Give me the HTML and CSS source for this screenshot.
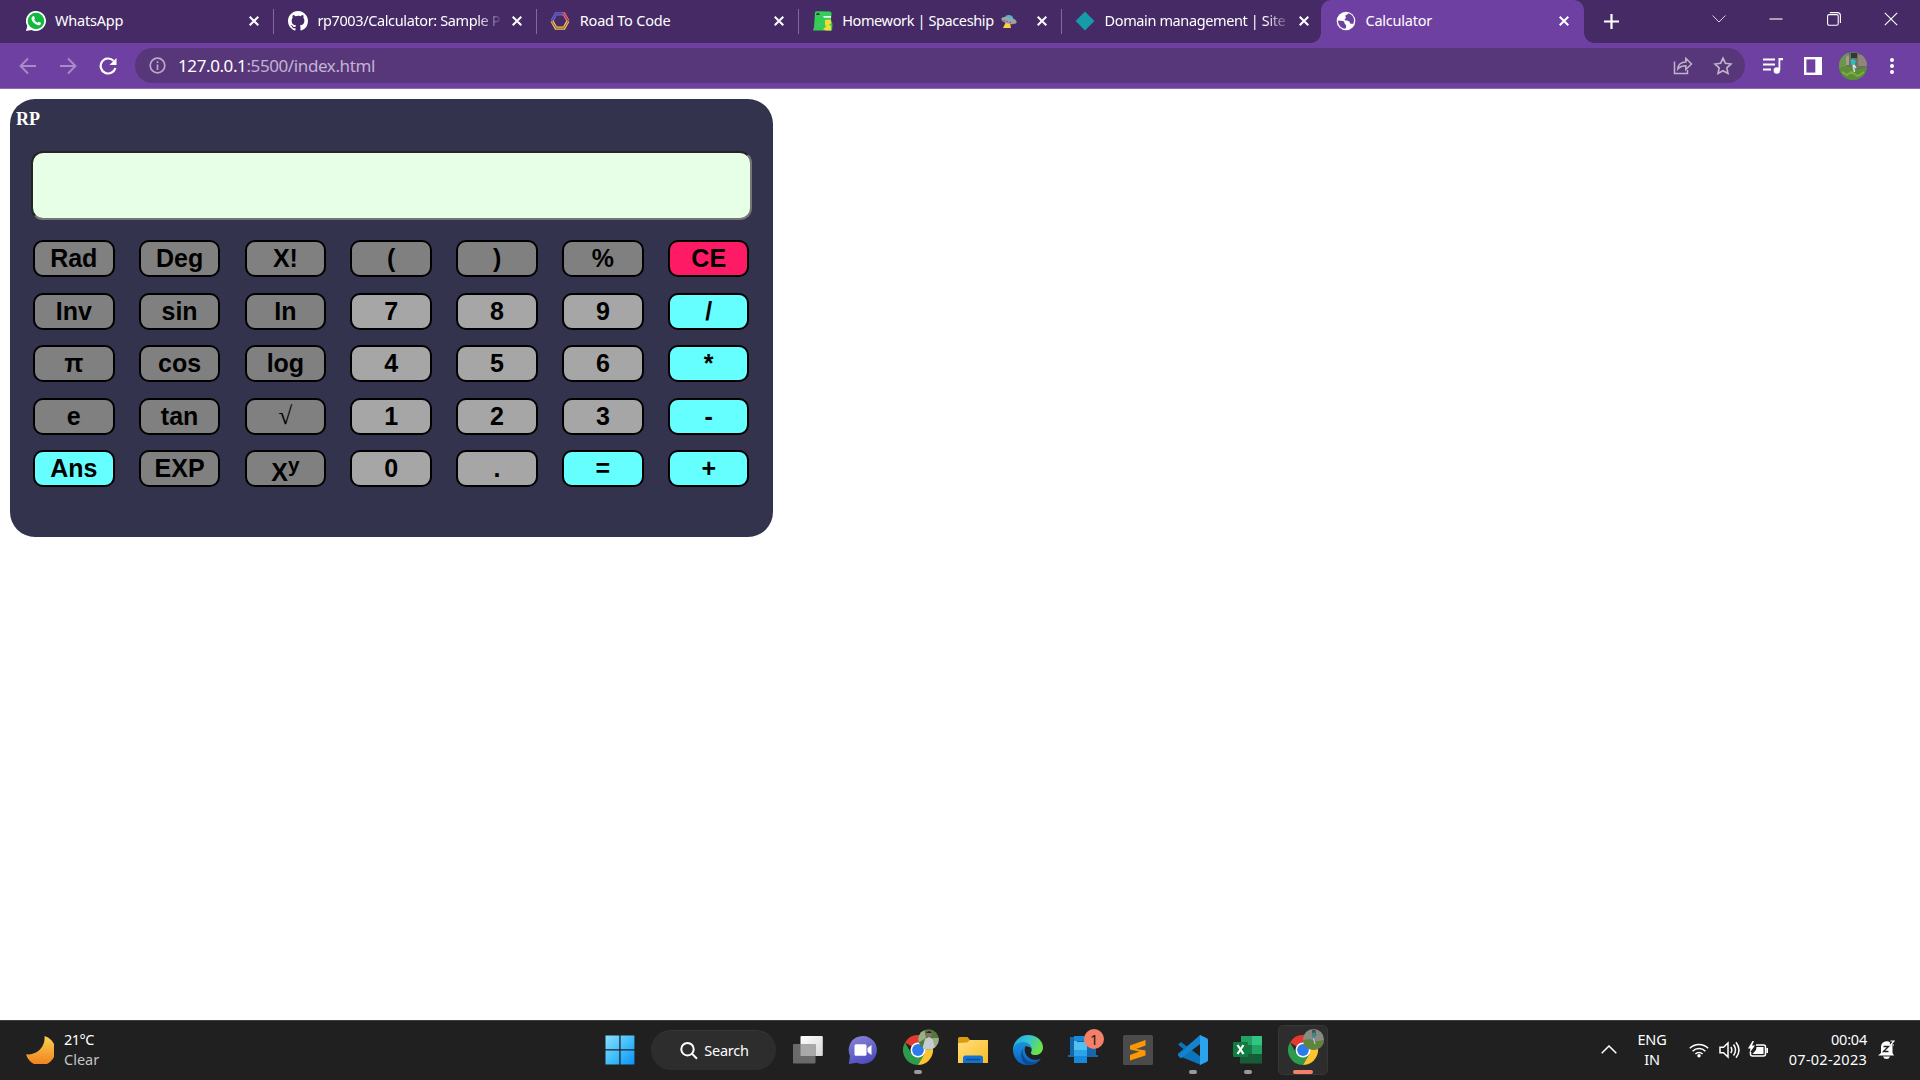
FILE: index.html
```html
<!DOCTYPE html>
<html lang="en">
<head>
<meta charset="utf-8">
<title>Calculator</title>
<link rel="stylesheet" href="styles.css">
</head>
<body>
<svg class="defs" aria-hidden="true">
  <defs>
    <linearGradient id="winG" x1="0" y1="0" x2="1" y2="1"><stop offset="0" stop-color="#8adfff"/><stop offset=".5" stop-color="#43bffc"/><stop offset="1" stop-color="#0a93fb"/></linearGradient>
    <linearGradient id="moonG" x1="0" y1="0" x2="0" y2="1"><stop offset="0" stop-color="#f8d34c"/><stop offset="1" stop-color="#f07f1e"/></linearGradient>
    <linearGradient id="chatG" x1="0" y1="0" x2=".4" y2="1"><stop offset="0" stop-color="#8b86d4"/><stop offset="1" stop-color="#514fc4"/></linearGradient>
    <linearGradient id="tvG" x1="0" y1="0" x2="1" y2="1"><stop offset="0" stop-color="#ffffff"/><stop offset="1" stop-color="#d8d8d8"/></linearGradient>
    <linearGradient id="folderG" x1="0" y1="0" x2="1" y2="1"><stop offset="0" stop-color="#ffdf7c"/><stop offset="1" stop-color="#f9bc27"/></linearGradient>
    <linearGradient id="edgeTop" x1="0" y1="0" x2="1" y2=".4"><stop offset="0" stop-color="#1ba6e6"/><stop offset=".5" stop-color="#33c3d6"/><stop offset="1" stop-color="#6be24a"/></linearGradient>
    <linearGradient id="edgeLow" x1="0" y1="0" x2="0" y2="1"><stop offset="0" stop-color="#1a93e0"/><stop offset="1" stop-color="#0b5fc0"/></linearGradient>
    <symbol id="x" viewBox="0 0 10 10"><path d="M.7.7l8.6 8.6M9.3.7L.7 9.3" stroke="#fff" stroke-width="2" fill="none"/></symbol>
    <symbol id="chrome" viewBox="0 0 30 30">
      <path d="M15 15L2 7.5A15 15 0 0 1 28 7.5z" fill="#e23a2e"/>
      <path d="M15 0a15 15 0 0 1 13 7.5H15z" fill="#e23a2e"/>
      <path d="M2 7.5A15 15 0 0 0 15 30l6.5-11.300L15 15 8.500 18.750z" fill="#2c9b4b"/>
      <path d="M28 7.500A15 15 0 0 1 15 30L21.500 18.750 15 7.500z" fill="#fcc52f"/>
      <circle cx="15" cy="15" r="7.500" fill="#fff"/><circle cx="15" cy="15" r="5.900" fill="#2b7bea"/>
    </symbol>
  </defs>
</svg>

<header class="tabstrip">
  <div class="tab">
    <svg class="fav" viewBox="0 0 20 20"><path d="M10 0a10 10 0 1 1-4.600 18.900L0 20l1.300-5A10 10 0 0 1 10 0z" fill="#fff"/><circle cx="10" cy="10" r="8.300" fill="#12b93e"/><path d="M6.800 5.200c.6-.4 1.200-.1 1.400.4l.7 1.600c.1.500-.7 1-.7 1.400.7 1.500 1.800 2.500 3.300 3.200.5.100.9-1.100 1.400-1l1.900.9c.5.300 0 1.700-.8 2.200-1.200.8-3.100.2-4.700-.8-1.900-1.200-3.600-3.200-3.800-5-.1-1.200.5-2.300 1.300-2.900z" fill="#fff"/></svg>
    <span class="title">WhatsApp</span><svg class="close"><use href="#x"/></svg>
  </div>
  <div class="tab">
    <svg class="fav" viewBox="0 0 16 16"><path fill="#fff" d="M8 0C3.580 0 0 3.580 0 8c0 3.540 2.290 6.530 5.470 7.590.4.070.55-.17.55-.38 0-.19-.01-.82-.01-1.490-2.010.37-2.530-.49-2.690-.94-.09-.23-.48-.94-.82-1.130-.28-.15-.68-.52-.01-.53.63-.01 1.080.58 1.230.82.72 1.210 1.870.87 2.330.66.07-.52.28-.87.51-1.070-1.780-.2-3.640-.89-3.640-3.950 0-.87.31-1.590.82-2.150-.08-.2-.36-1.020.08-2.120 0 0 .67-.21 2.200.82A7.600 7.600 0 0 1 8 3.860c.68 0 1.360.09 2 .27 1.530-1.040 2.200-.82 2.200-.82.44 1.100.16 1.920.08 2.120.51.56.82 1.270.82 2.150 0 3.070-1.870 3.750-3.650 3.950.29.25.54.73.54 1.480 0 1.070-.01 1.930-.01 2.200 0 .21.15.46.55.38A8.010 8.010 0 0 0 16 8c0-4.420-3.580-8-8-8z"/></svg>
    <span class="title fade snug">rp7003/Calculator: Sample P</span><svg class="close"><use href="#x"/></svg>
  </div>
  <div class="tab">
    <svg class="fav" viewBox="0 0 20 20" fill="none" stroke-width="3.200"><path d="M2 10l4-7.200h7" stroke="#6a62d8"/><path d="M12.500 2.800H14L18 10" stroke="#f0686c"/><path d="M2 10l4 7.200h8L18 10" stroke="#f2c14a"/><path d="M1.800 10L6 2.800h8l4.200 7.200-4.200 7.200H6z" stroke="#462a66" stroke-width=".7"/></svg>
    <span class="title">Road To Code</span><svg class="close"><use href="#x"/></svg>
  </div>
  <div class="tab">
    <svg class="fav" viewBox="0 0 20 20"><path d="M2 1Q3 0 5 .3L17 .5q2 .5 1.500 2.500l-.5 6 1.500 4-.5 6.500H0l1-3z" fill="#35cd57"/><path d="M10 5h8v1.800h-7z" fill="#eafbe8"/><path d="M12 9l6-.5v4l-2 1 2 1.500v4.500h-5l-3-1 3-3-1-2z" fill="#f2dc3b"/><path d="M3 3l2.500-1.500L7 4H3z" fill="#1c4f2d"/></svg>
    <span class="title snug">Homework | Spaceship</span>
    <svg class="ufo" viewBox="0 0 16 14"><path d="M5 8l-3 6h8l-1-5z" fill="#fbd23b"/><path d="M4 4a4 3.500 10 0 1 8 1z" fill="#35b9f1"/><ellipse cx="8" cy="6.500" rx="7.800" ry="3.300" transform="rotate(14 8 6.500)" fill="#9da3a8"/><path d="M2.500 6.500l9 2.300" stroke="#5c6368" stroke-width="1.200" stroke-dasharray="1.500 1.500"/></svg>
    <span class="grow"></span><svg class="close"><use href="#x"/></svg>
  </div>
  <div class="tab">
    <svg class="fav" viewBox="0 0 20 20"><path d="M10 .6L19.400 10 10 19.400.6 10z" fill="#159baa"/></svg>
    <span class="title fade snug">Domain management | Site</span><svg class="close"><use href="#x"/></svg>
  </div>
  <div class="tab active">
    <svg class="fav" viewBox="0 0 20 20"><circle cx="10" cy="10" r="9.300" fill="#fff"/><path d="M2 9.500c2 .3 4 0 5.600.8 1.400.8.400 2.600 1.800 3.200 1.200.6 1 2.500-.1 4.300C5 17.500 2 14 2 9.500zM12.300 2.300c-.2 1.500-1.700 1.400-2.700 2-.8.800.5 1.700.2 2.700-.2.900-1.700 1.200-1.100 2.100.8 1 2.800.4 4.100 1.100 1.200.7.900 2 1.800 2.500.9.300 1.900-.2 2.600.3C19.500 8 17 3.800 12.300 2.300z" fill="#6e40a1"/></svg>
    <span class="title">Calculator</span><svg class="close"><use href="#x"/></svg>
  </div>
  <svg class="newtab" viewBox="0 0 15 15"><path d="M7.500 0v15M0 7.500h15" stroke="#fff" stroke-width="2.200"/></svg>
  <div class="winctl">
    <svg class="thin" viewBox="0 0 14 14"><path d="M.6 3.500L7 10l6.400-6.500"/></svg>
    <svg viewBox="0 0 14 14"><path d="M.5 7h13"/></svg>
    <svg viewBox="0 0 14 14"><rect x=".6" y="2.600" width="10.600" height="10.600" rx="1.500"/><path d="M2.800.6h7.600a3 3 0 0 1 3 3v7.400"/></svg>
    <svg viewBox="0 0 14 14"><path d="M.8.8l12.400 12.400M13.200.8L.8 13.200"/></svg>
  </div>
</header>

<nav class="toolbar">
  <svg class="nav dim" viewBox="0 0 18 18"><path d="M17 9H2M9 1.500L1.500 9 9 16.500"/></svg>
  <svg class="nav dim" viewBox="0 0 18 18"><path d="M1 9h15M9 1.500L16.500 9 9 16.500"/></svg>
  <svg class="nav reload" viewBox="0 0 18 18"><path d="M16.400 11A7.500 7.500 0 1 1 14.500 3.700" /><path d="M17.500 1v7h-7z" fill="#fff" stroke="none"/></svg>
  <div class="omnibox">
    <svg class="info" viewBox="0 0 17 17"><circle cx="8.500" cy="8.500" r="7.300"/><path d="M8.500 7.500V13M8.500 4.200v1.900"/></svg>
    <span class="url"><b>127.0.0.1</b>:5500/index.html</span>
    <svg class="oicon share" viewBox="0 0 20 18"><path d="M1.500 4.500v12h13V13M4.800 12c.5-4.800 3-7 8-7V1.300L18.500 7l-5.700 5.500V8.800c-3.600 0-5.800.8-8 3.200z"/></svg>
    <svg class="oicon" viewBox="0 0 18 18"><path d="M9 2l2.150 4.600 5 .6-3.700 3.450 1 5L9 13.200l-4.450 2.450 1-5L1.850 7.200l5-.6z"/></svg>
  </div>
  <svg class="music" viewBox="0 0 20 16"><path d="M0 1.500h12M0 6.500h12M0 11.500h8" stroke="#fff" stroke-width="2"/><path d="M15.500 0H20v2.200h-2.700V12h-1.800z" fill="#fff"/><circle cx="13.800" cy="12.500" r="3.200" fill="#fff"/></svg>
  <svg class="panel" viewBox="0 0 18 18"><rect x="1.200" y="1.200" width="15.600" height="15.600" fill="none" stroke="#fff" stroke-width="2.400"/><path d="M11.300 2h6v14h-6z" fill="#fff"/></svg>
  <svg class="avatar" viewBox="0 0 28 28"><clipPath id="av"><circle cx="14" cy="14" r="14"/></clipPath><g clip-path="url(#av)"><path d="M0 0h28v28H0z" fill="#6d705f"/><path d="M0 0h10l-3 16H0z" fill="#6c9550"/><path d="M12 1h6v5h-6z" fill="#33363a"/><path d="M19 3h9v11h-9z" fill="#8f857e"/><path d="M7 5l3-2v10H7z" fill="#a39c90"/><path d="M0 16q8-3 14 0t14-1v13H0z" fill="#5a8f35"/><path d="M3 20l5 3 4-3 7 4 6-4" stroke="#7fae48" stroke-width="1.600" fill="none"/><path d="M11.500 8l3-1 2.500 2-1.500 4h-3z" fill="#22c0c6"/><path d="M14 13l1.500 7M15 13l2 3" stroke="#d7e1e5" stroke-width="1.500"/></g></svg>
  <svg class="dots" viewBox="0 0 4 16"><circle cx="2" cy="2" r="2"/><circle cx="2" cy="8" r="2"/><circle cx="2" cy="14" r="2"/></svg>
</nav>

<main class="page">
  <section class="calculator">
    <div class="brand">RP</div>
    <div class="display"></div>
    <div class="keys">
      <button>Rad</button><button>Deg</button><button>X!</button><button>(</button><button>)</button><button>%</button><button class="clear">CE</button>
      <button>Inv</button><button>sin</button><button>In</button><button class="num">7</button><button class="num">8</button><button class="num">9</button><button class="op">/</button>
      <button>π</button><button>cos</button><button>log</button><button class="num">4</button><button class="num">5</button><button class="num">6</button><button class="op">*</button>
      <button>e</button><button>tan</button><button class="root">√</button><button class="num">1</button><button class="num">2</button><button class="num">3</button><button class="op">-</button>
      <button class="op">Ans</button><button>EXP</button><button class="power">X<sup>y</sup></button><button class="num">0</button><button class="num">.</button><button class="op">=</button><button class="op">+</button>
    </div>
  </section>
</main>

<footer class="taskbar">
  <div class="weather">
    <svg class="moon" viewBox="0 0 28 28"><path d="M18.500 0A15 15 0 1 1 0 18.300 16.500 16.500 0 0 0 18.500 0z" fill="url(#moonG)"/></svg>
    <div class="report"><div class="temp">21°C</div><div class="sky">Clear</div></div>
  </div>
  <div class="apps">
    <div class="app start"><svg class="ico" viewBox="0 0 30 30"><path d="M.5.500h13.800v13.800H.5zM15.600.500h13.800v13.800H15.600zM.5 15.600h13.800v13.800H.5zM15.600 15.600h13.800v13.800H15.600z" fill="url(#winG)"/></svg></div>
    <div class="search"><svg viewBox="0 0 18 18"><circle cx="7.500" cy="7.200" r="6.200"/><path d="M12 11.700l5 5"/></svg><span>Search</span></div>
    <div class="app"><svg class="ico" viewBox="0 0 30 30"><rect x="7.500" y="1" width="22.300" height="20" rx="1" fill="url(#tvG)"/><rect y="9" width="22.500" height="19.500" rx="1" fill="#6a6a6a"/><path d="M7.500 9h15v12h-15z" fill="#a9a9a9"/></svg></div>
    <div class="app"><svg class="ico" viewBox="0 0 30 30"><path d="M15 1a14 14 0 1 1-6 26.700L.8 29l1.200-8A14 14 0 0 1 15 1z" fill="url(#chatG)"/><rect x="6.500" y="9.300" width="12" height="11.500" rx="1.500" fill="#fff"/><path d="M19.500 13l4-3v10l-4-3z" fill="#fff"/></svg></div>
    <div class="app"><svg class="ico"><use href="#chrome"/></svg>
      <svg class="face" viewBox="0 0 21 21"><clipPath id="fa"><circle cx="10.500" cy="10.500" r="10.300"/></clipPath><g clip-path="url(#fa)"><path d="M0 0h21v21H0z" fill="#52783f"/><path d="M0 0h6l2 9-8 5zM15 9h6v12h-5z" fill="#9eae84"/><path d="M4 21l3-11 4-2 4 2 2 11z" fill="#c5cbd1"/><circle cx="11" cy="5" r="3" fill="#86705e"/><path d="M8 4q3-4 6 0z" fill="#222"/></g></svg><i class="dot"></i></div>
    <div class="app"><svg class="ico" viewBox="0 0 30 30"><path d="M0 3.500Q0 2 1.500 2h8l3 3.500V10H0z" fill="#dc9a10"/><path d="M0 8l9-.5 3-2.500h18v23H0z" fill="url(#folderG)"/><path d="M5 28v-5q0-2.500 2.500-2.500h15Q25 20.500 25 23v5z" fill="#1274d0"/><path d="M8 24.500h14" stroke="#0a4b93" stroke-width="1.500"/></svg></div>
    <div class="app"><svg class="ico" viewBox="0 0 30 30"><path d="M0 15A15 15 0 0 1 15 0c9 0 15 6 15 12.500 0 5-4 7.500-7.500 7.500-3 0-5-1.200-4.500-2.500 1.600-3 .5-6-3-6L8 9z" fill="url(#edgeTop)"/><path d="M0 15C1 9 6 7 10 7c5 0 9 3 9 8-1-3-3-4.200-5-4.200-3.500 0-3.500 9.200 3 12.700 4 2.200 8 1.500 11 0A15 15 0 0 1 15 30C6 30 0 23 0 15z" fill="url(#edgeLow)"/><path d="M12 11c-4 3-3 11 3 15 4 2.500 9 1 12.500-2.500-4 4.500-8.500 6.300-12.500 6.500-6-1-10-12-3-19z" fill="#0d4a8f"/></svg></div>
    <div class="app"><svg class="ico" viewBox="0 0 30 30"><path d="M2 2h26v18h2v2H0v-2h2z" fill="#1469ae"/><path d="M6 1h13v27H6z" fill="#168ad9"/><path d="M6 6h13v9H6z" fill="#52c1f2"/><path d="M6 15h13v6H6z" fill="#2ca5e8"/><path d="M9 6.500h7" stroke="#0c5c9f"/></svg><span class="badge">1</span></div>
    <div class="app"><svg class="ico" viewBox="0 0 30 30"><rect width="30" height="30" rx="1.500" fill="#4b4b4b"/><path d="M7 10.500L22.500 5v5.500L13 14l9.500 1.500v5L7 25.500V20l9.500-3.500L7 14.500z" fill="#ff9800"/></svg></div>
    <div class="app"><svg class="ico" viewBox="0 0 30 30"><path d="M0 9.500l3-2.600L23 22v8L0 20.500v-2L22.500 0l.5 8.500L3 23.200l-3-2.700 6.500-5.500z" fill="#0b74ba"/><path d="M0 20.500L22 0l1 8L3 23.200z" fill="#1583ce"/><path d="M22 0l6.500 3q1.500.7 1.500 2v20q0 1.300-1.500 2L22 30z" fill="#2ba3ef"/></svg><i class="dot"></i></div>
    <div class="app"><svg class="ico" viewBox="0 0 30 30"><path d="M8 1h10.700v9H8z" fill="#21a366"/><path d="M18.500 1H29v9H18.500z" fill="#33c481"/><path d="M7 10h11.500v9H7z" fill="#107c41"/><path d="M18.500 10H29v9H18.500z" fill="#21a366"/><path d="M7 19h22v9.500H7z" fill="#185c37"/><rect y="7" width="15" height="15" rx="1" fill="#107c41"/><path d="M4.500 10l6 9M10.500 10l-6 9" stroke="#fff" stroke-width="2.200"/></svg><i class="dot"></i></div>
    <div class="app current"><svg class="ico"><use href="#chrome"/></svg>
      <svg class="face" viewBox="0 0 28 28"><g clip-path="url(#av)"><path d="M0 0h28v28H0z" fill="#878b84"/><path d="M12 1h5v8h-5z" fill="#4a4f53"/><path d="M0 15q8-3 14 0t14-1v14H0z" fill="#60833f"/><path d="M12 5h4v8h-3z" fill="#3a8d97"/><path d="M14 12l2 8" stroke="#b9c3c7" stroke-width="1.500"/></g></svg><i class="dot"></i></div>
  </div>
  <div class="tray">
    <svg class="up" viewBox="0 0 16 9"><path d="M.7 8.300L8 1l7.300 7.300"/></svg>
    <div class="lang">ENG<br>IN</div>
    <svg class="wifi" viewBox="0 0 20 16"><path d="M.8 6.300a13 13 0 0 1 18.400 0M3.600 9.200a9 9 0 0 1 12.800 0M6.400 12a5 5 0 0 1 7.200 0"/><circle cx="10" cy="13.800" r="1.700" fill="#fff" stroke="none"/></svg>
    <svg class="vol" viewBox="0 0 21 18"><path d="M1 6.200h3.500L9 2v14l-4.500-4.200H1zM11.800 6q2 3 0 6M14.500 3.500q4 5.500 0 11M17 1.200q6 7.800 0 15.600"/></svg>
    <svg class="bat" viewBox="0 0 21 17"><path d="M8 4h7.500q2 0 2 2v7q0 2-2 2h-11q-2 0-2-2v-2"/><path d="M8.500 6h7v7h-11L8 9zM18.300 7H20v5h-1.700zM4.500 0L0 7.500h2.500L1.500 12 7 4.500H4L6 0z" fill="#fff" stroke="none"/></svg>
    <div class="clock">00:04<br><span class="date">07-02-2023</span></div>
    <svg class="bell" viewBox="0 0 17 19"><path d="M3 13V6.500A5.500 5.500 0 0 1 8.500 1.200q5 0 6 5.300v6.500l1.500 2.500H0zM5 16.500h7q-1 2.500-3.500 2.500T5 16.500z" fill="#fff"/><path d="M5.500 6.500h5l-5 5h5" stroke="#202020" stroke-width="1.400" fill="none"/><path d="M11.500-.2H17v5.500h-5z" fill="#202020"/><path d="M12.500 1h3.500l-3.500 4H16" stroke="#fff" stroke-width="1.200" fill="none"/></svg>
  </div>
</footer>
</body>
</html>
```
FILE: styles.css
```css
* { box-sizing: border-box; }
html, body { height: 100%; }
body {
  margin: 0;
  display: flex;
  flex-direction: column;
  overflow: hidden;
  background: #fff;
  font-family: "Noto Sans", "Open Sans", sans-serif;
  color: #fff;
}
svg { display: block; flex: none; }
.defs { position: absolute; width: 0; height: 0; }

/* Tab strip */
.tabstrip { display: flex; flex: none; height: 43px; padding-left: 12px; background: #462a66; }
.tab {
  display: flex;
  align-items: center;
  flex: none;
  width: 262.4px;
  padding: 0 15px 1px 13.500px;
  background: linear-gradient(#81699c, #81699c) right 9px / 1px 25px no-repeat;
}
.tab:nth-child(5) { background: none; }
.fav { width: 20px; height: 20px; margin-right: 9.500px; }
.title { flex: 1; margin: -2px 8px 0 0; white-space: nowrap; font-size: 14.5px; letter-spacing: -.22px; line-height: 24px; }
.snug { letter-spacing: -.38px; }
.fade { -webkit-mask-image: linear-gradient(90deg, #000 160px, transparent 186px); mask-image: linear-gradient(90deg, #000 160px, transparent 186px); }
.ufo { width: 16px; height: 14px; }
.tab:has(.ufo) .title { flex: none; margin-right: 7px; }
.grow { flex: 1; }
.close { width: 10px; height: 10px; }
.active {
  position: relative;
  margin-left: -3px;
  width: 263px;
  padding-left: 15px;
  padding-right: 15px;
  background: #6e40a1;
  border-radius: 10px 10px 0 0;
}
.active::before, .active::after {
  content: "";
  position: absolute;
  bottom: 0;
  width: 10px;
  height: 10px;
}
.active::before { left: -10px; background: radial-gradient(circle at 0 0, transparent 9.500px, #6e40a1 10px); }
.active::after { right: -10px; background: radial-gradient(circle at 100% 0, transparent 9.500px, #6e40a1 10px); }
.newtab { width: 15px; height: 15px; margin: 14px 0 0 20px; }
.winctl { display: flex; gap: 43.500px; margin: 11.500px 22px 0 auto; }
.winctl svg { width: 14px; height: 14px; fill: none; stroke: #fff; stroke-width: 1.100; }
.winctl .thin { stroke-width: .8; }

/* Toolbar */
.toolbar {
  display: flex;
  align-items: center;
  flex: none;
  height: 46px;
  padding: 0 25px 0 19px;
  background: #6e40a1;
  border-bottom: 1px solid #8f6cb6;
}
.nav { width: 18px; height: 18px; margin-right: 22px; fill: none; stroke: #fff; stroke-width: 2.200; }
.dim { stroke: #a98cc9; stroke-width: 1.900; }
.reload { margin-right: 18px; }
.omnibox {
  display: flex;
  align-items: center;
  width: 1610px;
  height: 35px;
  padding: 0 12px 0 14px;
  border-radius: 18px;
  background: #573779;
}
.info { width: 17px; height: 17px; fill: none; stroke: #b9aac8; stroke-width: 1.700; }
.url { flex: 1; margin-left: 12px; font-size: 17px; letter-spacing: -.4px; color: #c3b3d4; }
.url b { font-weight: 400; color: #fff; }
.oicon { width: 20px; height: 20px; fill: none; stroke: #bfb4c9; stroke-width: 1.500; }
.share { height: 18px; margin-right: 20px; }
.music { width: 20px; height: 16px; margin-left: 18px; }
.panel { width: 18px; height: 18px; margin-left: 21px; }
.avatar { width: 28px; height: 28px; margin-left: 17px; }
.dots { width: 4px; height: 16px; margin-left: 23px; fill: #fff; }

/* Calculator */
.page { flex: 1; padding: 10px; }
.calculator {
  width: 763px;
  height: 438px;
  padding: 8px 21px 0;
  border-radius: 25px;
  background: #34334d;
}
.brand { height: 44px; margin-left: -15px; font: bold 18px/25px "Liberation Serif", serif; }
.display {
  width: 721px;
  height: 69px;
  border: 2px solid;
  border-color: #242424 #767676 #767676 #242424;
  border-radius: 12px;
  background: #e6ffe6;
}
.keys {
  display: grid;
  grid-template-columns: repeat(7, 81.5px);
  grid-template-rows: repeat(5, 37px);
  column-gap: 24.330px;
  row-gap: 15.500px;
  margin: 20px 0 0 2px;
}
button {
  display: block;
  padding: 0 0 1px;
  border: 2px solid #000;
  border-radius: 10px;
  background: #808080;
  color: #000;
  font: bold 25px/28px "Liberation Sans", sans-serif;
}
.num { background: #a6a6a6; }
.op { background: #66ffff; }
.clear { background: #ff1a66; }
.root { font-family: "Liberation Serif", serif; font-weight: 400; }
.power { padding: 6px 0 0; line-height: 20px; }
.power sup { font-size: 20.800px; line-height: 0; }

/* Taskbar */
.taskbar {
  position: relative;
  display: grid;
  grid-template-columns: 590px 1fr 320px;
  flex: none;
  height: 60px;
  background: #202020;
  border-top: 1px solid #3c3f40;
  font-size: 14.500px;
  line-height: 20px;
  letter-spacing: -.2px;
}
.weather { display: flex; align-items: center; padding-left: 26px; gap: 10px; }
.moon { width: 28px; height: 28px; margin-top: -2px; }
.report { margin-top: -4px; }
.temp { letter-spacing: -.5px; }
.sky { color: #c4c4c4; letter-spacing: 0; }
.apps { display: flex; align-items: center; }
.app { position: relative; display: grid; place-items: center; width: 50px; height: 50px; margin-right: 5px; border-radius: 5px; }
.start { margin-left: 4.500px; margin-right: 6.500px; }
.start ~ .app { flex: none; }
.start + .search { margin-right: 7px; }
.ico { width: 30px; height: 30px; }
.start, .app { margin-top: -1px; }
.search {
  display: flex;
  align-items: center;
  justify-content: center;
  flex: none;
  gap: 6px;
  width: 125px;
  height: 40px;
  margin-top: -1px;
  border-radius: 20px;
  background: #2d2d2d;
  border-top: 1px solid #373737;
}
.search svg { width: 18px; height: 18px; margin-left: 2px; fill: none; stroke: #fff; stroke-width: 2; }
.search span { margin-top: -2px; }
.face { position: absolute; left: 25px; top: 4px; width: 21px; height: 21px; }
.dot { position: absolute; left: 21px; bottom: 1px; width: 8px; height: 4px; border-radius: 2px; background: #9a9a9a; }
.current { background: #2d2d2d; border: 1px solid #373737; }
.current .face { left: 24px; top: 3px; }
.current .dot { left: 14px; bottom: 0; width: 20px; background: #f4806a; }
.badge {
  position: absolute;
  left: 26px;
  top: 4px;
  width: 20px;
  height: 20px;
  border-radius: 50%;
  background: #f4806a;
  color: #26140f;
  text-align: center;
}
.tray { display: flex; align-items: center; padding-left: 1px; }
.tray svg { margin-top: -2px; fill: none; stroke: #fff; stroke-width: 1.500; }
.up { width: 16px; height: 9px; }
.lang { width: 30px; margin: -3px 22px 0 20px; text-align: center; }
.wifi { width: 20px; height: 16px; }
.tray .vol { width: 21px; height: 18px; margin-left: 9.500px; }
.tray .bat { width: 21px; height: 17px; margin-left: 8.500px; }
.clock { width: 98px; margin-top: -4px; text-align: right; }
.date { letter-spacing: .25px; }
.tray .bell { width: 17px; height: 19px; margin-left: 11px; stroke: none; }
```
